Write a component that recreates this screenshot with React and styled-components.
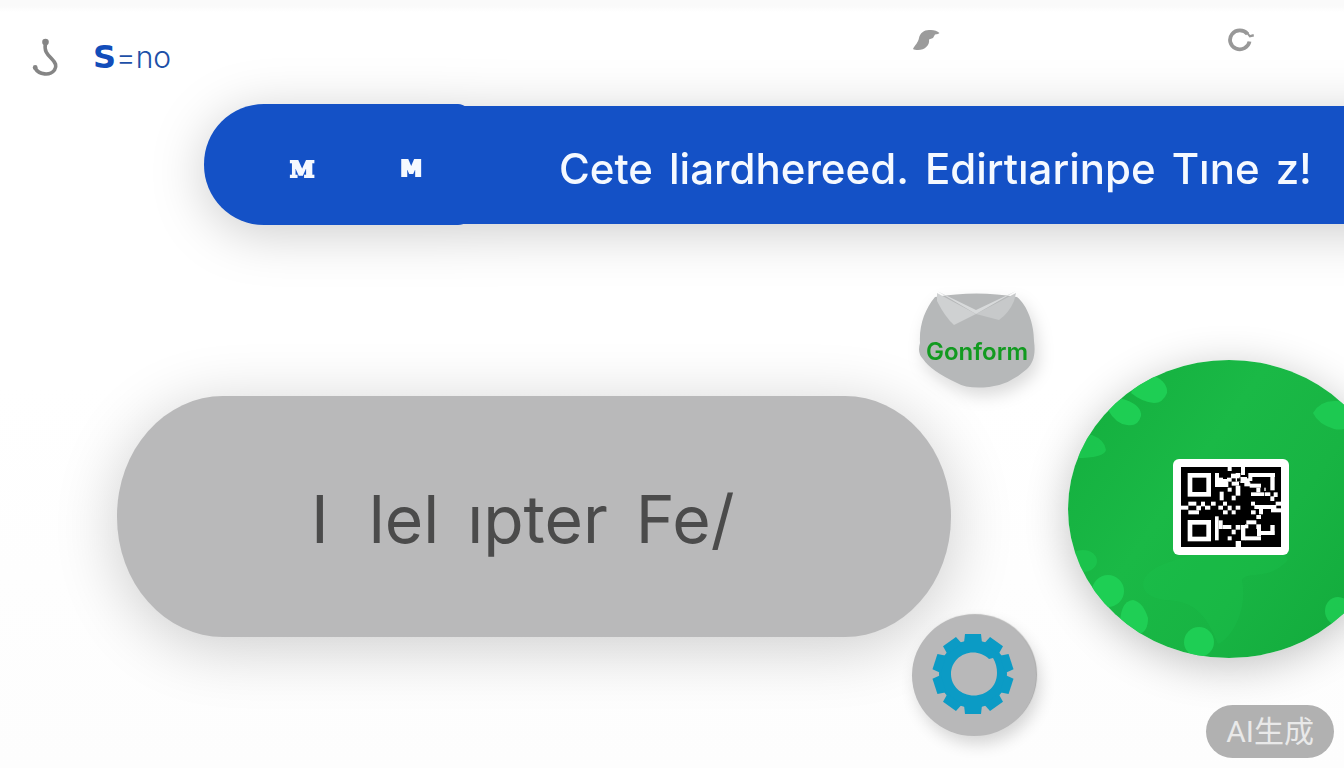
import React from "react";
import styled, { createGlobalStyle } from "styled-components";

const GlobalStyle = createGlobalStyle`
  *, *::before, *::after { box-sizing: border-box; }
  body {
    margin: 0;
    background: #fdfdfd;
    font-family: Inter, "Noto Sans CJK SC", sans-serif;
  }
  button { border: 0; padding: 0; margin: 0; background: none; font: inherit; cursor: pointer; }
  svg { display: block; }
`;

const Page = styled.div`
  display: flex;
  flex-direction: column;
  min-height: 100vh;
  overflow: hidden;
  background: linear-gradient(#fafafa 0, #fafafa 6px, #ffffff 12px, #ffffff 50%, #fdfdfd 100%);
`;

const Header = styled.header`
  display: grid;
  grid-template-columns: 913fr 315fr 116fr;
  height: 104px;
  padding-top: 28px;
`;

const Brand = styled.div`
  display: flex;
  align-items: flex-start;
  gap: 34px;
  padding: 10px 0 0 32px;
`;

const BrandLink = styled.a`
  display: flex;
  align-items: baseline;
  color: #1d50a8;
  font-size: 30px;
  font-weight: 300;
  line-height: 38px;
  text-decoration: none;
`;

const BrandInitial = styled.span`
  font-family: "DejaVu Sans", sans-serif;
  font-size: 32px;
  font-weight: 700;
  color: #124dba;
`;

const IconButton = styled.button`
  align-self: start;
  justify-self: start;
`;

const Banner = styled.section`
  display: flex;
  align-items: center;
  margin: 0 -80px 0 204px;
  filter: drop-shadow(0 8px 26px rgba(0, 0, 0, 0.2));
`;

const Tabs = styled.nav`
  display: flex;
  align-items: center;
  gap: 86px;
  width: 266px;
  height: 121px;
  padding: 8px 0 0 86px;
  border-radius: 60px 12px 12px 60px;
  background: #1451c6;
`;

const Tab = styled.button`
  color: #f5f9ff;
  font-family: ${(p) => (p.$slab ? '"DejaVu Serif", serif' : '"DejaVu Sans", sans-serif')};
  font-size: 22px;
  font-weight: 700;
  line-height: 24px;
  -webkit-text-stroke: 2px #f5f9ff;
`;

const Message = styled.h1`
  flex: 1;
  display: flex;
  align-items: center;
  gap: 16px;
  height: 118px;
  margin: 0 0 0 -12px;
  padding: 8px 32px 0 101px;
  background: #1451c6;
  color: #f5f9ff;
  font-size: 42px;
  font-weight: 500;
  line-height: 52px;
  white-space: nowrap;
`;

const Main = styled.main`
  flex: 1;
  display: grid;
  grid-template-columns: 1fr 124px 308px;
`;

const Panel = styled.button`
  display: flex;
  align-items: center;
  justify-content: flex-start;
  gap: 28px;
  height: 241px;
  margin: 171px -39px 0 117px;
  padding: 4px 0 0 194px;
  border-radius: 106px / 120px;
  background: #b9b9ba;
  box-shadow: 0 10px 64px rgba(0, 0, 0, 0.2);
  color: #4b4b4b;
  font-size: 66px;
  line-height: 80px;
  white-space: nowrap;
`;

const Lead = styled.span`
  margin-right: 12px;
`;

const Side = styled.div`
  display: flex;
  flex-direction: column;
  align-items: center;
  justify-content: space-between;
  padding: 66px 0 32px;
`;

const Mail = styled.button`
  position: relative;
  width: 116px;
  height: 98px;
  margin-left: 6px;
  padding-top: 24px;
  color: #129a20;
  font-size: 24px;
  font-weight: 600;
  line-height: 32px;
  filter: drop-shadow(4px 8px 8px rgba(0, 0, 0, 0.14));
`;

const MailShape = styled.svg`
  position: absolute;
  inset: 0;
  z-index: -1;
`;

const Gear = styled.button`
  display: flex;
  align-items: center;
  justify-content: center;
  width: 124px;
  height: 121px;
  padding: 0 2px 4px 0;
  border-radius: 50%;
  background: #b8b8b9;
  box-shadow: 4px 8px 16px rgba(0, 0, 0, 0.16), 1px -1px 1px rgba(0, 0, 0, 0.25);
`;

const Share = styled.aside`
  display: flex;
  flex-direction: column;
  justify-content: space-between;
  padding: 135px 0 10px 32px;
`;

const Disc = styled.div`
  position: relative;
  display: flex;
  align-items: center;
  justify-content: center;
  width: 322px;
  height: 298px;
  padding: 0 0 4px 4px;
  border-radius: 50%;
  overflow: hidden;
  background: linear-gradient(125deg, #13ad3d 0%, #1ab946 38%, #18b443 62%, #11a83a 100%);
`;

const DiscShadow = styled.div`
  width: 322px;
  border-radius: 50%;
  box-shadow: 0 8px 44px rgba(0, 0, 0, 0.24);
`;

const Bubbles = styled.svg`
  position: absolute;
  inset: 0;
`;

const CodeCard = styled.div`
  position: relative;
  padding: 8px;
  border-radius: 6px;
  background: #ffffff;
`;

const Badge = styled.span`
  align-self: flex-end;
  margin-right: 10px;
  padding: 0 20px;
  border-radius: 27px;
  background: #b1b1b1;
  color: #e9e9e9;
  font-family: Roboto, "Noto Sans CJK SC", sans-serif;
  font-size: 30px;
  line-height: 53px;
  white-space: nowrap;
`;

function HookIcon() {
  return (
    <svg width="27" height="39" viewBox="0 0 27 39" fill="none" stroke="#858585" strokeLinecap="round">
      <circle cx="13.5" cy="4" r="3.3" fill="#858585" stroke="none" />
      <path d="M13.500 5C12 13 15 16 19 20C24 25 25 28 22.500 32C18 38 7 37 3 30" strokeWidth="3.600" />
      <circle cx="3.200" cy="29.500" r="2.400" fill="#858585" stroke="none" />
    </svg>
  );
}

function LeafIcon() {
  return (
    <svg width="27" height="24" viewBox="0 0 27 24" fill="#9b9b9b">
      <path d="M0 21C2 17 5 15 6 10C7 5 11 2 16 2C20 1.500 24 2.500 26.500 5L25 6L22 6.500L20 10L16 11.500C17 17 12 22 5 22C3 22 1 21.700 0 21Z" />
    </svg>
  );
}

function RingIcon() {
  return (
    <svg width="27" height="24" viewBox="0 0 27 24" fill="none">
      <path d="M19.500 6A9.800 9.400 0 1 0 21.500 13.500" stroke="#989898" strokeWidth="3.800" />
      <path d="M18 5L21.500 9.500L26 8.500L25.500 6L22 7L20 4Z" fill="#989898" />
    </svg>
  );
}

const teeth = [0, 36, 72, 108, 144, 180, 216, 252, 288, 324];

function GearIcon() {
  return (
    <svg width="82" height="82" viewBox="-41 -41 82 82" fill="#0b9bc5">
      <path
        fillRule="evenodd"
        d="M0-34A34 34 0 1 1 0 34A34 34 0 1 1 0-34ZM0-21.500C6-21.500 12-19 16-15L20-16C23-11 24-6 24-1C24 13 13 21.500 1 21.500C-12 21.500-22 12-22 0C-22-12-12-21.500 0-21.500Z"
      />
      {teeth.map((a) => (
        <path key={a} transform={`rotate(${a})`} d="M-8-40L8-40L9-31L-9-31Z" />
      ))}
    </svg>
  );
}

/* White modules of the code: x, y, width, height, three units to a pixel. */
const modules = [
  [140, 0, 12, 12], [180, 0, 12, 24], [102, 18, 12, 42], [114, 32, 12, 14], [114, 44, 28, 16],
  [126, 36, 14, 12], [138, 32, 14, 12], [150, 20, 16, 14], [152, 44, 22, 12], [164, 30, 12, 14],
  [164, 18, 14, 12], [178, 30, 20, 18], [164, 56, 14, 30], [140, 62, 12, 12], [152, 86, 12, 14],
  [116, 74, 12, 26], [202, 18, 80, 12], [202, 30, 12, 12], [268, 18, 13, 52], [190, 34, 16, 14],
  [206, 50, 34, 12], [226, 62, 12, 14], [210, 76, 40, 11], [190, 46, 18, 12], [250, 62, 4, 10],
  [252, 76, 16, 11], [278, 76, 12, 14], [268, 88, 12, 14], [284, 104, 16, 12], [0, 116, 22, 12],
  [22, 104, 24, 12], [22, 130, 32, 12], [46, 116, 14, 14], [60, 104, 12, 14], [72, 116, 16, 12],
  [90, 104, 14, 12], [112, 116, 14, 12], [126, 130, 14, 12], [140, 116, 12, 14], [152, 130, 12, 12],
  [164, 116, 14, 12], [126, 104, 12, 12], [210, 104, 12, 12], [220, 114, 66, 12], [210, 130, 14, 12],
  [234, 124, 12, 18], [270, 124, 30, 12], [226, 144, 14, 12], [102, 148, 11, 72], [113, 160, 12, 26],
  [125, 174, 26, 12], [196, 160, 30, 12], [226, 172, 14, 14], [152, 188, 12, 14], [164, 174, 14, 14],
  [140, 208, 12, 12], [164, 222, 16, 18], [180, 174, 13, 46], [192, 172, 10, 12], [192, 208, 48, 12],
  [228, 186, 12, 22], [240, 192, 40, 12], [268, 174, 13, 30],
];

function CodeDrawing() {
  return (
    <svg width="100" height="80" viewBox="0 0 300 240" role="img" aria-label="QR code">
      <rect width="300" height="240" fill="#000" />
      <g fill="none" stroke="#fff" strokeWidth="14">
        <rect x="27" y="25" width="56" height="57" />
        <rect x="27" y="166" width="56" height="50" />
      </g>
      <g fill="#fff">
        {modules.map(([x, y, w, h]) => (
          <rect key={`${x}-${y}`} x={x} y={y} width={w} height={h} />
        ))}
      </g>
      <rect x="168" y="34" width="10" height="9" fill="#000" />
    </svg>
  );
}

export default function App() {
  return (
    <>
      <GlobalStyle />
      <Page>
        <Header>
          <Brand>
            <HookIcon />
            <BrandLink href="#">
              <BrandInitial>S</BrandInitial>=no
            </BrandLink>
          </Brand>
          <IconButton aria-label="Leaf"><LeafIcon /></IconButton>
          <IconButton aria-label="Refresh"><RingIcon /></IconButton>
        </Header>

        <Banner>
          <Tabs>
            <Tab $slab>M</Tab>
            <Tab>M</Tab>
          </Tabs>
          <Message>
            <span>Cete</span>
            <span>liardhereed.</span>
            <span>Edirtıarinpe</span>
            <span>Tıne</span>
            <span>z!</span>
          </Message>
        </Banner>

        <Main>
          <Panel>
            <Lead>I</Lead>
            <span>lel</span>
            <span>ıpter</span>
            <span>Fe/</span>
          </Panel>

          <Side>
            <Mail>
              <MailShape width="116" height="100" viewBox="0 0 116 100">
                <path d="M16 6Q58-1 98 6C108 14 115 32 115 50C117 64 114 72 108 78Q90 94 70 96Q48 98 38 92Q12 80 4 68Q-2 62 1 52C0 34 6 18 16 6Z" fill="#b6b8b9" />
                <path d="M18 2L57 23L35 34Q26 26 18 10Z" fill="#cfd1d2" />
                <path d="M97 2L57 23L80 29Q90 22 95 10Z" fill="#c7c9ca" />
                <path d="M18 0L57 23L97 0L57 19Z" fill="#d8dadb" />
              </MailShape>
              Gonform
            </Mail>
            <Gear aria-label="Settings"><GearIcon /></Gear>
          </Side>

          <Share>
            <DiscShadow>
              <Disc>
                <Bubbles width="322" height="298" viewBox="0 0 322 298" fill="#20d257">
                  <path d="M63 33Q70 16 86 16Q100 22 99 33Q95 43 86 43Q74 42 63 33Z" opacity=".85" />
                  <path d="M40 50Q48 36 58 40Q74 46 73 56Q70 67 59 65Q48 64 40 50Z" opacity=".85" />
                  <path d="M8 98Q14 74 24 75Q37 80 38 90Q36 98 8 98Z" opacity=".6" />
                  <path d="M245 53Q252 41 266 41Q285 40 292 58Q280 72 266 69Q250 64 245 53Z" opacity=".7" />
                  <ellipse cx="15" cy="201" rx="14" ry="11" opacity=".45" />
                  <ellipse cx="40" cy="231" rx="16" ry="16" opacity=".85" />
                  <path d="M52 270Q51 241 65 240Q75 242 80 258Q80 272 71 274Z" opacity=".9" />
                  <ellipse cx="131" cy="282" rx="15" ry="15" opacity=".85" />
                  <ellipse cx="270" cy="251" rx="13" ry="14" opacity=".75" />
                  <path d="M82 212C108 190 216 180 220 200C200 222 180 210 174 220C180 250 164 278 150 284C140 260 130 240 96 240C70 236 72 220 82 212Z" opacity=".12" />
                </Bubbles>
                <CodeCard><CodeDrawing /></CodeCard>
              </Disc>
            </DiscShadow>
            <Badge>AI生成</Badge>
          </Share>
        </Main>
      </Page>
    </>
  );
}
